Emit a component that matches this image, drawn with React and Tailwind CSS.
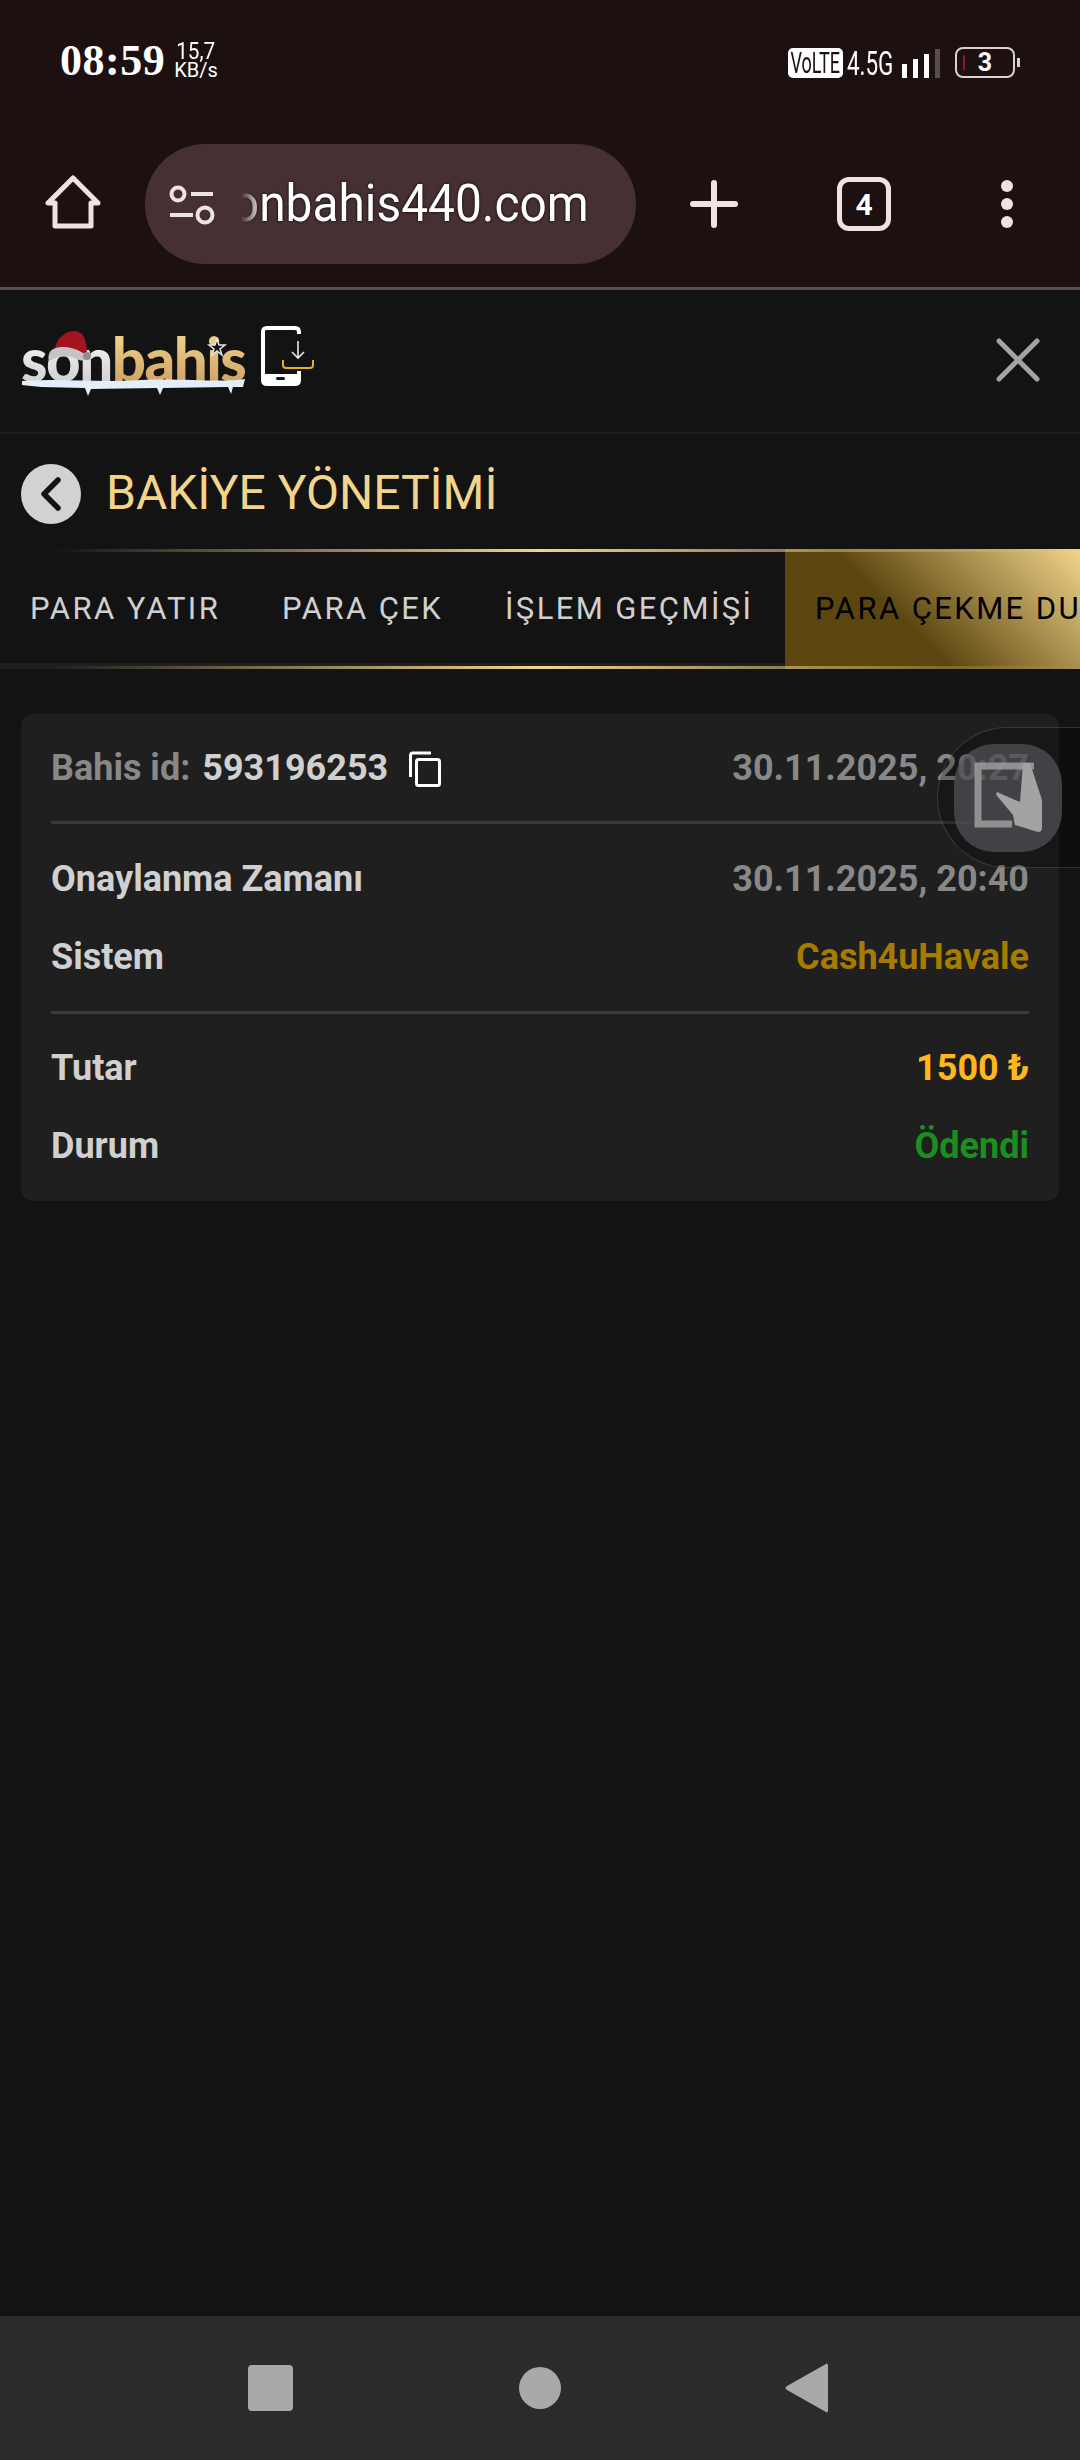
import React from 'react';

const rowLabel = "text-[#d0d0d0]";

function HomeIcon() {
  return (
    <svg width="56" height="56" viewBox="0 0 56 56" fill="none" stroke="#efe3e1" strokeWidth="5" strokeLinejoin="round">
      <path d="M28 4 L3 29 H10 V52 H46 V29 H53 Z" />
    </svg>
  );
}

function SiteSettingsIcon() {
  return (
    <svg width="46" height="40" viewBox="0 0 46 40" fill="none" stroke="#efe3e1" strokeWidth="4">
      <circle cx="9" cy="9" r="6.5" />
      <path d="M22 9 H44" />
      <path d="M1 30 H24" />
      <circle cx="36" cy="30" r="7.5" />
    </svg>
  );
}

function Logo() {
  return (
    <div className="relative w-[226px] h-[66px] font-['Lato',sans-serif]">
      <div className="flex h-[66px] text-[60px] leading-[66px] font-black tracking-[-1.5px]">
        <span className="bg-[linear-gradient(180deg,#ffffff,#c9c9c9)] bg-clip-text text-transparent">son</span>
        <span className="bg-[linear-gradient(180deg,#f5da90,#c99a60)] bg-clip-text text-transparent">bahis</span>
      </div>
      {/* santa hat, star and snow */}
      <svg className="absolute left-0 top-[-8px]" width="226" height="84" viewBox="0 0 226 84">
        <path d="M34 30 C36 20 44 13 54 13 C62 13 66 22 66 36 Z" fill="#a3141c" />
        <path d="M28 36 C30 28 48 26 62 35 C68 40 64 44 58 42 C48 36 38 38 30 42 C27 43 27 40 28 36 Z" fill="#c4c4c4" />
        <circle cx="66" cy="38" r="4" fill="#8f8f8f" />
        <path d="M196 21 L198 27 L204 27 L199 31 L201 37 L196 33 L191 37 L193 31 L188 27 L194 27 Z" fill="#131313" stroke="#e5e5e5" strokeWidth="1.5" />
        <path d="M1 63 C40 60 80 65 120 62 C160 60 200 65 224 61 L222 69 L212 69 L210 76 L207 69 L142 70 L139 77 L136 70 L70 71 L67 78 L64 70 L20 69 L1 67 Z" fill="#e4eefa" />
      </svg>
    </div>
  );
}

function PhoneDownloadIcon() {
  return (
    <svg width="54" height="60" viewBox="0 0 54 60" fill="none">
      <path d="M38 8 V6 C38 3 36 2 34 2 H6 C3 2 2 3 2 6 V54 C2 57 3 58 6 58 H34 C36 58 38 57 38 54 V45" stroke="#fff" strokeWidth="4" />
      <rect x="2" y="48" width="36" height="10" rx="2" fill="#fff" />
      <rect x="15" y="51" width="9" height="3" rx="1.5" fill="#131313" />
      <path d="M37 15 V32 M31 26 L37 32 L43 26" stroke="#e8e8e8" strokeWidth="1.6" />
      <path d="M22 34 V39 C22 41 23 42 25 42 H49 C51 42 52 41 52 39 V34" stroke="#e0b11e" strokeWidth="2" />
    </svg>
  );
}

function CopyIcon() {
  return (
    <svg width="32" height="36" viewBox="0 0 32 36" fill="none" stroke="#fff" strokeWidth="3">
      <path d="M22 2 H4 C2.5 2 1.5 3 1.5 4.5 V26" />
      <rect x="7.5" y="8.5" width="23" height="26" rx="2" />
    </svg>
  );
}

function Row({ label, value, valueClass }) {
  return (
    <div className="flex items-center justify-between h-[78px]">
      <span className={rowLabel}>{label}</span>
      <span className={valueClass}>{value}</span>
    </div>
  );
}

function FloatingButton() {
  return (
    <div className="absolute left-[937px] top-[727px] w-[143px] h-[141px] rounded-l-[71px] bg-black/25 border border-r-0 border-white/15 pl-[16px] pt-[16px]">
      <div className="relative w-[108px] h-[108px] rounded-[40px] bg-[#55565b]/70">
        <svg className="absolute left-[20px] top-[18px]" width="70" height="72" viewBox="0 0 70 72" fill="none">
          <path d="M60 4 H4 V62 H38" stroke="#a3a3a3" strokeOpacity="0.8" strokeWidth="7" />
          <path d="M49 1 H56 L68 38 V66 C68 69 66 70 64 70 L41 63 L39 53 L24 35 C22 33 22 31 23 30 L46 40 Z" fill="#a3a3a3" />
        </svg>
      </div>
    </div>
  );
}

export default function App() {
  return (
    <div className="relative w-[1080px] h-[2460px] flex flex-col bg-[#131313] overflow-hidden font-['Roboto',sans-serif]">
      {/* android status + browser toolbar */}
      <div className="h-[290px] bg-[#1c1011] border-b-[3px] border-[#5b4d4d] flex flex-col shrink-0">
        <div className="h-[120px] flex items-start justify-between pt-[42px] pl-[60px] pr-[60px] text-white">
          <div className="flex items-start">
            <span className="font-['Liberation_Serif',serif] font-bold text-[44px] leading-[38px] tracking-[0.5px]">08:59</span>
            <div className="ml-[9px] flex flex-col items-center">
              <span className="text-[23px] leading-[20px] scale-x-[0.9]">15,7</span>
              <span className="text-[20px] leading-[17px]">KB/s</span>
            </div>
          </div>
          <div className="flex items-end mt-[5px] h-[31px]">
            <span className="bg-white text-[#1c1011] rounded-[5px] h-[30px] w-[55px] flex items-center justify-center text-[30px] leading-none overflow-hidden">
              <span className="scale-x-[0.6] whitespace-nowrap">VoLTE</span>
            </span>
            <span className="w-[46px] h-[30px] ml-[4px] flex items-center justify-center text-[33px] leading-none whitespace-nowrap">
              <span className="scale-x-[0.68]">4.5G</span>
            </span>
            <div className="flex items-end gap-[6px] h-[30px] ml-[9px]">
              <div className="w-[5px] h-[14px] bg-white" />
              <div className="w-[5px] h-[19px] bg-white" />
              <div className="w-[5px] h-[24px] bg-white" />
              <div className="w-[5px] h-[29px] bg-[#5a4c4c]" />
            </div>
            <div className="ml-[15px] relative w-[60px] h-[31px] rounded-[8px] border-[2.5px] border-[#d9d0d0] flex items-center justify-center text-[25px] font-bold">
              <div className="absolute left-[6px] top-[6px] w-[2px] h-[15px] bg-[#8b1a1a]" />
              3
            </div>
            <div className="w-[3px] h-[9px] ml-[2px] mb-[11px] bg-[#d9d0d0]" />
          </div>
        </div>
        <div className="flex items-start pt-[24px]">
          <div className="w-[145px] flex justify-center pt-[30px]">
            <HomeIcon />
          </div>
          <div className="relative w-[491px] h-[120px] rounded-[60px] bg-[#463033] flex items-center pl-[24px] shrink-0">
            <div className="mt-[2px]"><SiteSettingsIcon /></div>
            <div className="ml-[26px] w-[348px] flex justify-end overflow-hidden whitespace-nowrap text-[52px] leading-[64px] text-white [text-shadow:0_0_3px_#000] [mask-image:linear-gradient(90deg,transparent,#000_22px)]">
              <span className="shrink-0 origin-right scale-x-[0.92]">sonbahis440.com</span>
            </div>
          </div>
          <div className="flex-1 flex items-center h-[120px] text-[#efe3e1]">
            <div className="ml-[54px]">
              <svg className="block" width="48" height="48" viewBox="0 0 48 48" stroke="#efe3e1" strokeWidth="6" strokeLinecap="round">
                <path d="M24 3 V45 M3 24 H45" />
              </svg>
            </div>
            <div className="ml-[99px] shrink-0 w-[54px] h-[54px] rounded-[12px] border-[5px] border-[#efe3e1] flex items-center justify-center text-white text-[30px] font-bold [text-shadow:0_0_2px_#000]">
              4
            </div>
            <div className="ml-[110px] flex flex-col gap-[6px]">
              <div className="w-[12px] h-[12px] rounded-full bg-[#efe3e1]" />
              <div className="w-[12px] h-[12px] rounded-full bg-[#efe3e1]" />
              <div className="w-[12px] h-[12px] rounded-full bg-[#efe3e1]" />
            </div>
          </div>
        </div>
      </div>

      {/* site header */}
      <div className="h-[144px] shrink-0 border-b-[2px] border-[#1f1f1f] flex items-center pl-[21px] pb-[4px]">
        <Logo />
        <div className="ml-[14px] mt-[-6px]"><PhoneDownloadIcon /></div>
        <svg className="ml-auto mr-[40px] mt-[2px]" width="44" height="44" viewBox="0 0 44 44" stroke="#a3a3a3" strokeWidth="5" strokeLinecap="round">
          <path d="M3 3 L41 41 M41 3 L3 41" />
        </svg>
      </div>

      {/* page title */}
      <div className="h-[115px] shrink-0 flex items-center pl-[21px] pt-[4px]">
        <div className="w-[60px] h-[60px] rounded-full bg-[#d2d2d2] flex items-center justify-center">
          <svg width="22" height="34" viewBox="0 0 22 34" fill="none" stroke="#131313" strokeWidth="5.5" strokeLinecap="round" strokeLinejoin="round">
            <path d="M18 3 L4 17 L18 31" />
          </svg>
        </div>
        <h1 className="ml-[25px] mt-[-2px] text-[48px] leading-none text-[#f2d58a] whitespace-nowrap">BAKİYE YÖNETİMİ</h1>
      </div>

      {/* tabs */}
      <div className="relative h-[120px] shrink-0 flex items-center text-[31px] tracking-[2.4px] whitespace-nowrap overflow-hidden text-[#d0d0d0] bg-[#131313]">
        <div className="w-[282px] shrink-0 pl-[30px]">PARA YATIR</div>
        <div className="w-[223px] shrink-0">PARA ÇEK</div>
        <div className="w-[280px] shrink-0">İŞLEM GEÇMİŞİ</div>
        <div className="w-[295px] shrink-0 h-full flex items-center pl-[30px] overflow-hidden text-black bg-[linear-gradient(45deg,#5c4610_40%,#f2d58a_100%)]">
          PARA ÇEKME DURUMU
        </div>
        <div className="absolute left-0 right-0 top-0 h-[3px] bg-[linear-gradient(90deg,transparent_5%,#f2d58a_50%,transparent_100%)]" />
        <div className="absolute left-0 w-[785px] bottom-[3px] h-[3px] bg-[#1f1f1f]" />
        <div className="absolute left-0 right-0 bottom-0 h-[3px] bg-[linear-gradient(90deg,#1f1f1f_5%,#f2d58a_50%,transparent_100%)]" />
      </div>

      {/* withdrawal card */}
      <div className="mx-[21px] mt-[45px] h-[487px] rounded-[12px] bg-[#1f1f1f] px-[30px] text-[36px] font-bold">
        <div className="h-[110px] flex items-center justify-between border-b-[3px] border-[#3a3a3a]">
          <div className="flex items-center">
            <span className="text-[#888888]">Bahis id:</span>
            <span className="ml-[12px] text-[#d0d0d0]">593196253</span>
            <span className="ml-[21px] mt-[2px]"><CopyIcon /></span>
          </div>
          <span className="text-[#888888]">30.11.2025, 20:27</span>
        </div>
        <div className="pt-[16px] pb-[15px] border-b-[3px] border-[#3a3a3a]">
          <Row label="Onaylanma Zamanı" value="30.11.2025, 20:40" valueClass="text-[#888888]" />
          <Row label="Sistem" value="Cash4uHavale" valueClass="text-[#a67c00]" />
        </div>
        <div className="pt-[15px]">
          <Row label="Tutar" value="1500 ₺" valueClass="text-[#ffb81c]" />
          <Row label="Durum" value="Ödendi" valueClass="text-[#1a8f1f]" />
        </div>
      </div>

      <div className="flex-1" />

      {/* android nav bar */}
      <div className="h-[144px] shrink-0 bg-[#2b2b2d] flex items-center justify-center pr-[3px]">
        <div className="w-[45px] h-[46px] rounded-[4px] bg-[#a9a9a9]" />
        <div className="ml-[226px] w-[42px] h-[42px] rounded-full bg-[#a9a9a9]" />
        <svg className="ml-[224px]" width="44" height="50" viewBox="0 0 44 50" fill="#a9a9a9">
          <path d="M41 1 C42 0 43 1 43 3 V47 C43 49 42 50 41 49 L2 27 C0 26 0 24 2 23 Z" />
        </svg>
      </div>

      <FloatingButton />
    </div>
  );
}
